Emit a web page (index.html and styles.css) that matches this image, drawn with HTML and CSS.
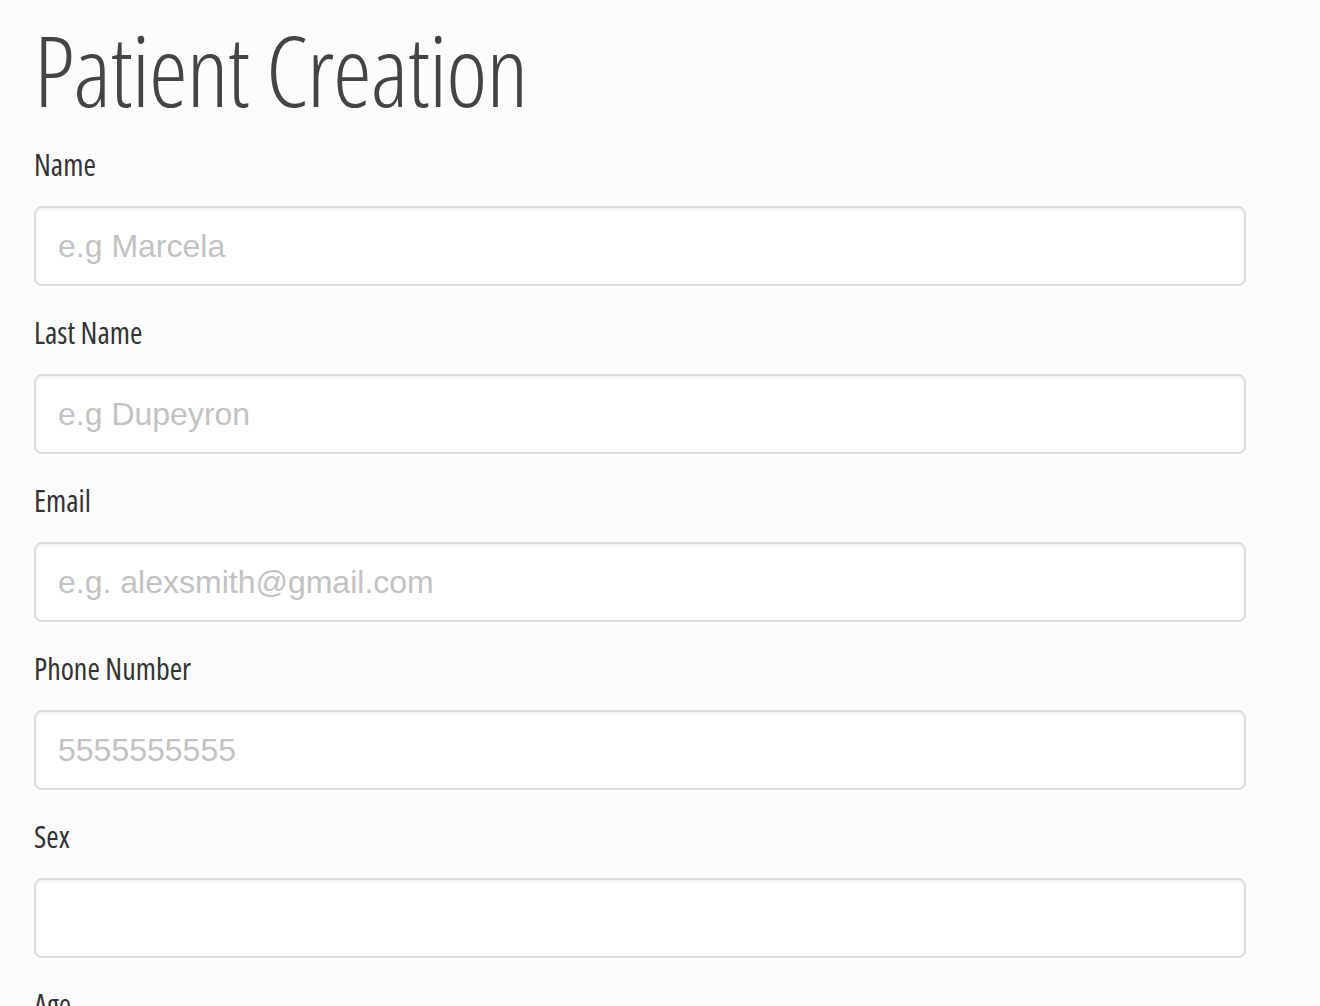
FILE: index.html
```html
<!DOCTYPE html>
<html lang="en">
<head>
<meta charset="utf-8">
<title>Patient Creation</title>
<link rel="stylesheet" href="styles.css">
</head>
<body>
<main class="page">
  <h1 class="title">Patient Creation</h1>
  <form class="form">
    <div class="field">
      <label class="label" for="name">Name</label>
      <input class="control" id="name" type="text" placeholder="e.g Marcela">
    </div>
    <div class="field">
      <label class="label" for="last">Last Name</label>
      <input class="control" id="last" type="text" placeholder="e.g Dupeyron">
    </div>
    <div class="field">
      <label class="label" for="email">Email</label>
      <input class="control" id="email" type="text" placeholder="e.g. alexsmith@gmail.com">
    </div>
    <div class="field">
      <label class="label" for="phone">Phone Number</label>
      <input class="control" id="phone" type="text" placeholder="5555555555">
    </div>
    <div class="field">
      <label class="label" for="sex">Sex</label>
      <input class="control" id="sex" type="text">
    </div>
    <div class="field">
      <label class="label" for="age">Age</label>
      <input class="control" id="age" type="text">
    </div>
  </form>
</main>
</body>
</html>
```

FILE: styles.css
```css
html, body {
  margin: 0;
  padding: 0;
  background: #fcfcfc;
}

.page {
  padding: 10px 74px 0 34px;
}

.title {
  margin: 0 0 16px 0;
  font-family: "Open Sans", sans-serif;
  font-stretch: 75%;
  font-weight: 300;
  font-size: 98px;
  line-height: 118px;
  color: #444;
  letter-spacing: -1px;
}

.form {
  display: flex;
  flex-direction: column;
}

.field {
  display: flex;
  flex-direction: column;
  margin-bottom: 26px;
}

.label {
  font-family: "Open Sans", sans-serif;
  font-stretch: 75%;
  font-weight: 500;
  font-size: 30px;
  line-height: 42px;
  color: #333;
  margin-bottom: 20px;
}

.control {
  box-sizing: border-box;
  height: 80px;
  width: 100%;
  margin: 0;
  padding: 0 22px;
  border: 2px solid #dcdcdc;
  border-radius: 8px;
  background: #fff;
  box-shadow: inset 0 2px 2px rgba(0, 0, 0, 0.05);
  font-family: "Liberation Sans", Arial, sans-serif;
  font-size: 32px;
  color: #555;
  outline: none;
}

.control::placeholder {
  color: #c2c2c2;
  opacity: 1;
}
```
